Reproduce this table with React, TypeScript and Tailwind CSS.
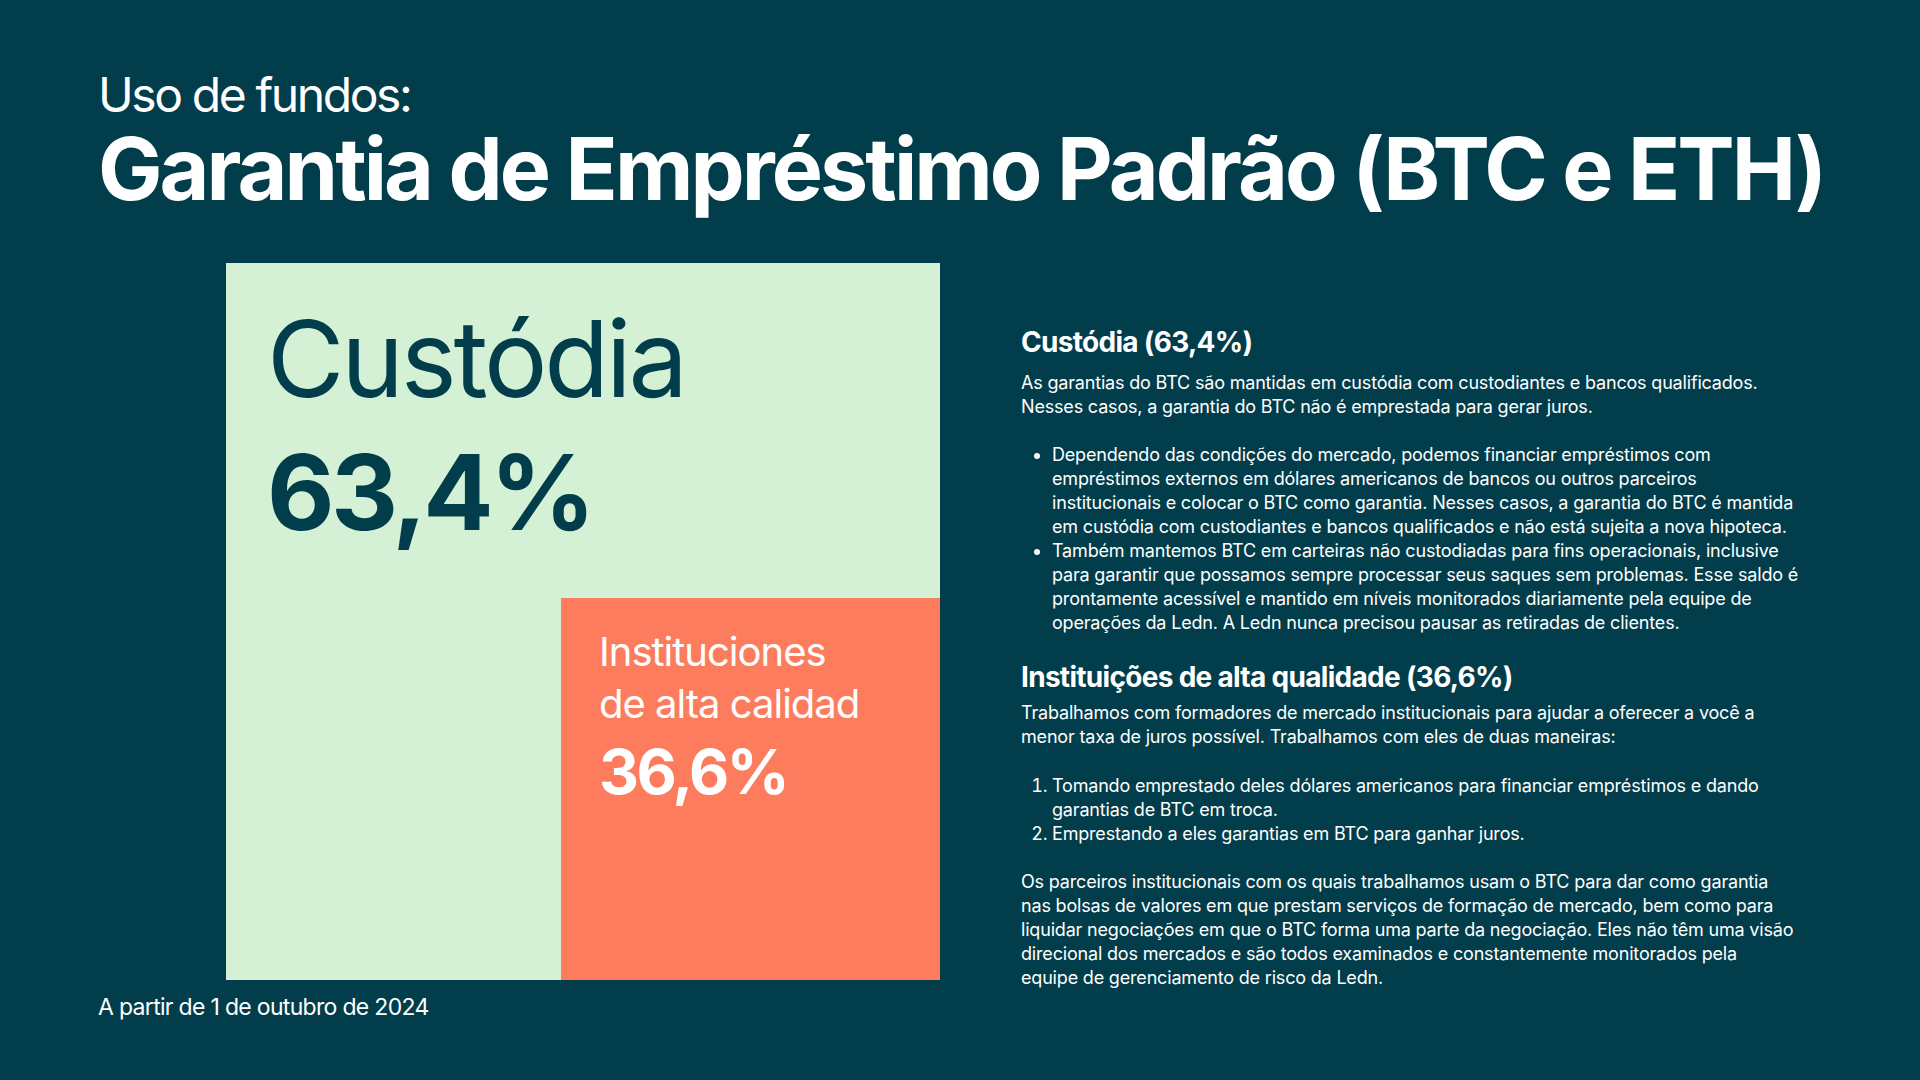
import React from "react";

export default function App() {
  return (
    <div className="w-[1920px] h-[1080px] bg-[#023d4b] text-white font-['Inter',sans-serif] overflow-hidden">
      <div className="flex flex-col pl-[98px]">
        <div className="pt-[71px] text-[48px] leading-none tracking-[-0.05em] font-normal">
          Uso de fundos:
        </div>
        <div className="mt-[7px] text-[86px] leading-none tracking-[-0.034em] font-bold whitespace-nowrap">
          Garantia de Empréstimo Padrão (BTC e ETH)
        </div>

        <div className="flex mt-[51px]">
          <div className="flex flex-col">
            <div className="ml-[128px] w-[714px] h-[717px] bg-[#d5f1d5] flex flex-col text-[#023d4b]">
              <div className="pl-[41px] pt-[38px]">
                <div className="text-[106px] leading-[1.1] tracking-[-0.03em] font-normal">Custódia</div>
                <div className="mt-[17px] text-[104px] leading-[1.1] tracking-[-0.035em] font-bold">63,4%</div>
              </div>
              <div className="mt-auto self-end w-[379px] h-[382px] bg-[#fe7c5e] text-white pl-[38px] pt-[28px]">
                <div className="text-[40px] leading-[52px] tracking-[-0.025em] font-normal">
                  Instituciones
                  <br />
                  de alta calidad
                </div>
                <div className="mt-[8px] text-[62px] leading-[1.1] tracking-[-0.04em] font-bold">36,6%</div>
              </div>
            </div>
            <div className="mt-[13px] text-[23px] leading-[28px] tracking-[-0.03em]">
              A partir de 1 de outubro de 2024
            </div>
          </div>

          <div className="ml-[81px] mt-[62px] w-[820px] text-[18px] leading-[24px] tracking-[-0.01em]">
            <div className="text-[28px] leading-[34px] font-bold tracking-[-0.025em] mb-[12px]">Custódia (63,4%)</div>
            <p>
              As garantias do BTC são mantidas em custódia com custodiantes e bancos qualificados.
              <br />
              Nesses casos, a garantia do BTC não é emprestada para gerar juros.
            </p>
            <ul className="list-disc pl-[31px] mt-[24px]">
              <li>
                Dependendo das condições do mercado, podemos financiar empréstimos com
                <br />
                empréstimos externos em dólares americanos de bancos ou outros parceiros
                <br />
                institucionais e colocar o BTC como garantia. Nesses casos, a garantia do BTC é mantida
                <br />
                em custódia com custodiantes e bancos qualificados e não está sujeita a nova hipoteca.
              </li>
              <li>
                Também mantemos BTC em carteiras não custodiadas para fins operacionais, inclusive
                <br />
                para garantir que possamos sempre processar seus saques sem problemas. Esse saldo é
                <br />
                prontamente acessível e mantido em níveis monitorados diariamente pela equipe de
                <br />
                operações da Ledn. A Ledn nunca precisou pausar as retiradas de clientes.
              </li>
            </ul>

            <div className="mt-[25px] text-[28px] leading-[34px] font-bold tracking-[-0.025em] mb-[7px]">
              Instituições de alta qualidade (36,6%)
            </div>
            <p>
              Trabalhamos com formadores de mercado institucionais para ajudar a oferecer a você a
              <br />
              menor taxa de juros possível. Trabalhamos com eles de duas maneiras:
            </p>
            <ol className="list-decimal pl-[31px] mt-[25px]">
              <li>
                Tomando emprestado deles dólares americanos para financiar empréstimos e dando
                <br />
                garantias de BTC em troca.
              </li>
              <li>Emprestando a eles garantias em BTC para ganhar juros.</li>
            </ol>
            <p className="mt-[24px]">
              Os parceiros institucionais com os quais trabalhamos usam o BTC para dar como garantia
              <br />
              nas bolsas de valores em que prestam serviços de formação de mercado, bem como para
              <br />
              liquidar negociações em que o BTC forma uma parte da negociação. Eles não têm uma visão
              <br />
              direcional dos mercados e são todos examinados e constantemente monitorados pela
              <br />
              equipe de gerenciamento de risco da Ledn.
            </p>
          </div>
        </div>
      </div>
    </div>
  );
}
